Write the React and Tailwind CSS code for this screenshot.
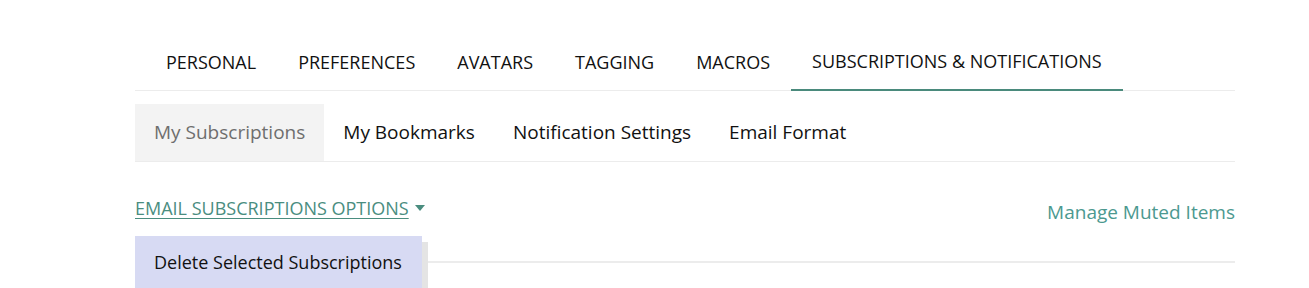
import React from 'react';

const topTabs = ['PERSONAL', 'PREFERENCES', 'AVATARS', 'TAGGING', 'MACROS', 'SUBSCRIPTIONS & NOTIFICATIONS'];
const subTabs = ['My Subscriptions', 'My Bookmarks', 'Notification Settings', 'Email Format'];

const App = () => {
  return (
    <div className="min-h-screen bg-white font-['Open_Sans','Noto_Sans',sans-serif] text-[#111]">
      <div className="ml-[135px] w-[1100px] pt-[33px]">
        {/* top tabs */}
        <div className="flex border-b border-[#ececec] pl-[10px]">
          {topTabs.map((t, i) => (
            <div
              key={t}
              className={`px-[21px] h-[58px] flex items-center text-[18px] -mb-px ${i === topTabs.length - 1 ? 'border-b-2 border-[#4a8a7c]' : ''}`}
            >
              {t}
            </div>
          ))}
        </div>

        {/* sub tabs */}
        <div className="flex border-b border-[#ececec] mt-[13px]">
          {subTabs.map((t, i) => (
            <div
              key={t}
              className={`px-[19px] h-[57px] flex items-center text-[19px] ${i === 0 ? 'bg-[#f3f3f3] text-[#6e6e6e]' : ''}`}
            >
              {t}
            </div>
          ))}
        </div>

        {/* options row */}
        <div className="flex justify-between items-start mt-[34px]">
          <button className="flex items-center gap-[6px] text-[18px] leading-[24px] text-[#4a8d7f] underline underline-offset-[3px] decoration-1">
            EMAIL SUBSCRIPTIONS OPTIONS
            <svg width="10" height="6" viewBox="0 0 10 6">
              <path d="M0 0h10L5 6z" fill="#4a8d7f" />
            </svg>
          </button>
          <a className="text-[19px] leading-[24px] text-[#4c9990] mt-[4px]">Manage Muted Items</a>
        </div>

        {/* dropdown + table header line */}
        <div className="relative mt-[12px] h-[52px]">
          <div className="absolute left-0 right-0 top-[25px] border-t-2 border-[#ececec]" />
          <div className="absolute left-0 top-0 w-[287px] h-[60px] bg-[#d7daf3] shadow-[6px_6px_0_#e4e4e4] z-10">
            <div className="px-[19px] pt-[14px] text-[18px] leading-[24px] text-[#111]">Delete Selected Subscriptions</div>
          </div>
        </div>
      </div>
    </div>
  );
};

export default App;
